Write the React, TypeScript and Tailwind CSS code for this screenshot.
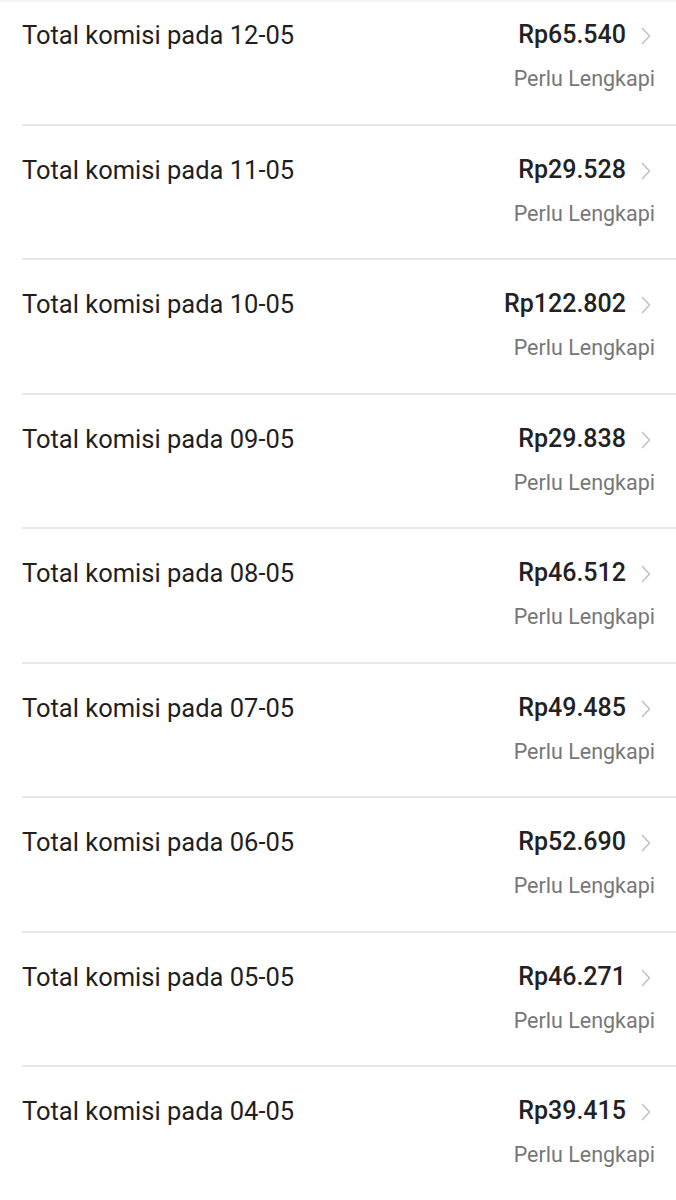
const rows = [
  { date: "12-05", amount: "Rp65.540" },
  { date: "11-05", amount: "Rp29.528" },
  { date: "10-05", amount: "Rp122.802" },
  { date: "09-05", amount: "Rp29.838" },
  { date: "08-05", amount: "Rp46.512" },
  { date: "07-05", amount: "Rp49.485" },
  { date: "06-05", amount: "Rp52.690" },
  { date: "05-05", amount: "Rp46.271" },
  { date: "04-05", amount: "Rp39.415" },
];

// chevron kecil di samping nominal
const Chevron = () => (
  <svg width="12" height="20" viewBox="0 0 12 20" fill="none" className="ml-[14px] mt-[2px]">
    <path d="M2.5 2.5 L9.5 10 L2.5 17.5" stroke="#c4c4c4" strokeWidth="1.7" strokeLinecap="round" strokeLinejoin="round" />
  </svg>
);

const App = () => {
  return (
    <div className="w-[676px] h-[1200px] overflow-hidden bg-white font-['Roboto',sans-serif]">
      <div className="h-[2px] bg-[#f6f6f6]" />
      <div className="-mt-[11px]">
        {rows.map((row) => (
          <div key={row.date} className="pl-[22px]">
            <div className="h-[132.5px] flex justify-between pr-[24px] pt-[29px]">
              <div className="text-[25.5px] leading-[30px] text-[#1f1f1f]">
                Total komisi pada {row.date}
              </div>
              <div className="flex flex-col items-end">
                <div className="flex items-center">
                  <span className="text-[25px] leading-[30px] font-medium text-[#222]">{row.amount}</span>
                  <Chevron />
                </div>
                <div className="mt-[16px] -mr-[3px] text-[21.5px] leading-[26px] text-[#777]">Perlu Lengkapi</div>
              </div>
            </div>
            <div className="h-[2px] bg-[#e8e8e8]" />
          </div>
        ))}
      </div>
    </div>
  );
};

export default App;
